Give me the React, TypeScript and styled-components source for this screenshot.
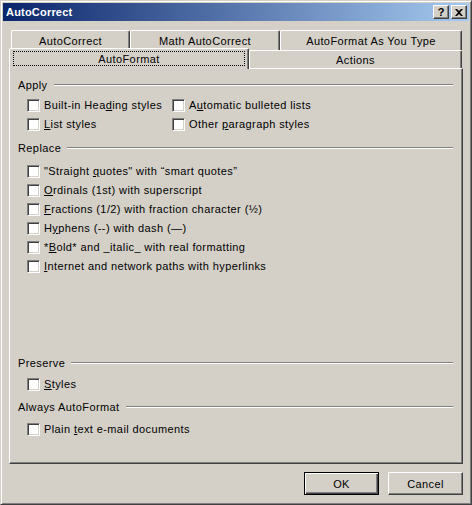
import styled, { createGlobalStyle } from 'styled-components';
import React from 'react';

// Global
const GlobalStyle = createGlobalStyle`
  html, body {
    margin: 0;
    padding: 0;
    background: #d4d0c8;
  }
  body {
    font-family: Tahoma, 'Liberation Sans', Arial, sans-serif;
    font-size: 11px;
    letter-spacing: 0.4px;
    color: #000;
  }
`;

type Option = { label: React.ReactNode };

const apply: Option[] = [
  { label: <>Built-in Hea<u>d</u>ing styles</> },
  { label: <>A<u>u</u>tomatic bulleted lists</> },
  { label: <><u>L</u>ist styles</> },
  { label: <>Other <u>p</u>aragraph styles</> },
];

const replace: Option[] = [
  { label: <>"Straight <u>q</u>uotes" with “smart quotes”</> },
  { label: <><u>O</u>rdinals (1st) with superscript</> },
  { label: <><u>F</u>ractions (1/2) with fraction character (½)</> },
  { label: <>H<u>y</u>phens (--) with dash (—)</> },
  { label: <>*<u>B</u>old* and _italic_ with real formatting</> },
  { label: <><u>I</u>nternet and network paths with hyperlinks</> },
];

function CheckRow({ label }: Option) {
  return (
    <Row>
      <Box />
      <Label>{label}</Label>
    </Row>
  );
}

function Group({
  title,
  top,
  pad,
  cols,
  items,
}: {
  title: string;
  top: number;
  pad: number;
  cols?: boolean;
  items: Option[];
}) {
  return (
    <GroupWrapper $top={top}>
      <Header>
        <HeaderText>{title}</HeaderText>
        <Etch />
      </Header>
      <Rows $pad={pad} $cols={cols}>
        {items.map((o, i) => (
          <CheckRow key={i} label={o.label} />
        ))}
      </Rows>
    </GroupWrapper>
  );
}

// Main
export default function App() {
  return (
    <>
      <GlobalStyle />
      <Window>
        <TitleBar>
          <Title>AutoCorrect</Title>
          <CaptionButtons>
            <CaptionButton aria-label='Help'>
              <HelpGlyph>?</HelpGlyph>
            </CaptionButton>
            <CaptionButton aria-label='Close'>
              <svg width='8' height='7' viewBox='0 0 8 7'>
                <path d='M0 0h2l2 2 2-2h2L5 3.5 8 7H6L4 5 2 7H0l3-3.5z' fill='#000' />
              </svg>
            </CaptionButton>
          </CaptionButtons>
        </TitleBar>

        <Body>
          <BackRow>
            <Tab $w={119}>AutoCorrect</Tab>
            <Tab $w={150}>Math AutoCorrect</Tab>
            <Tab $w={182}>AutoFormat As You Type</Tab>
          </BackRow>
          <FrontRow>
            <SelectedTab>
              <Focus>AutoFormat</Focus>
            </SelectedTab>
            <Tab $w={213} $h={18}>Actions</Tab>
          </FrontRow>

          <Panel>
            <Group title='Apply' top={9} pad={4} cols items={apply} />
            <Group title='Replace' top={7} pad={7} items={replace} />
            <Group title='Preserve' top={80} pad={5} items={[{ label: <><u>S</u>tyles</> }]} />
            <Group
              title='Always AutoFormat'
              top={6}
              pad={6}
              items={[{ label: <>Plain <u>t</u>ext e-mail documents</> }]}
            />
          </Panel>

          <ButtonRow>
            <Button $default>OK</Button>
            <Button>Cancel</Button>
          </ButtonRow>
        </Body>
      </Window>
    </>
  );
}

const Window = styled.div`
  width: 472px;
  height: 505px;
  box-sizing: border-box;
  background: #d4d0c8;
  border: 1px solid;
  border-color: #d4d0c8 #404040 #404040 #d4d0c8;
  box-shadow: inset 1px 1px #fff, inset -1px -1px #808080;
  padding: 2px;
  display: flex;
  flex-direction: column;
`;

const TitleBar = styled.div`
  height: 18px;
  background: linear-gradient(to right, #0a246a, #a6caf0);
  display: flex;
  align-items: center;
  justify-content: space-between;
  padding: 0 2px 0 3px;
`;

const Title = styled.span`
  color: #fff;
  font-weight: bold;
  font-size: 11px;
  letter-spacing: 0.2px;
`;

const CaptionButtons = styled.div`
  display: flex;
  gap: 2px;
`;

const CaptionButton = styled.div`
  width: 16px;
  height: 14px;
  box-sizing: border-box;
  background: #d4d0c8;
  border: 1px solid;
  border-color: #fff #404040 #404040 #fff;
  box-shadow: inset -1px -1px #808080;
  display: flex;
  align-items: center;
  justify-content: center;
`;

const HelpGlyph = styled.span`
  font-weight: bold;
  font-size: 11px;
  line-height: 11px;
  letter-spacing: 0;
`;

const Body = styled.div`
  flex: 1;
  display: flex;
  flex-direction: column;
  padding: 9px 6px 7px 6px;
`;

const BackRow = styled.div`
  display: flex;
  height: 20px;
  padding-left: 2px;
`;

const FrontRow = styled.div`
  display: flex;
  align-items: flex-end;
  height: 18px;
  position: relative;
  z-index: 1;
`;

const Tab = styled.div<{ $w: number; $h?: number }>`
  width: ${p => p.$w}px;
  height: ${p => p.$h ?? 20}px;
  box-sizing: border-box;
  background: #d4d0c8;
  border-top: 1px solid #fff;
  border-left: 1px solid #fff;
  border-right: 1px solid #404040;
  border-radius: 2px 2px 0 0;
  box-shadow: inset -1px 0 #808080;
  display: flex;
  align-items: center;
  justify-content: center;
  padding-top: 1px;
`;

const SelectedTab = styled.div`
  width: 240px;
  height: 21px;
  margin-bottom: -1px;
  box-sizing: border-box;
  background: #d4d0c8;
  border-top: 1px solid #fff;
  border-left: 1px solid #fff;
  border-right: 1px solid #404040;
  border-radius: 2px 2px 0 0;
  box-shadow: inset -1px 0 #808080;
  padding: 2px 3px 3px 3px;
  display: flex;
`;

const Focus = styled.div`
  flex: 1;
  border: 1px dotted #000;
  display: flex;
  align-items: center;
  justify-content: center;
`;

const Panel = styled.div`
  height: 396px;
  box-sizing: border-box;
  border: 1px solid;
  border-color: #fff #404040 #404040 #fff;
  box-shadow: inset -1px -1px #808080;
  padding: 0 9px 0 8px;
  display: flex;
  flex-direction: column;
`;

const GroupWrapper = styled.div<{ $top: number }>`
  margin-top: ${p => p.$top}px;
`;

const Header = styled.div`
  height: 14px;
  display: flex;
  align-items: center;
  gap: 6px;
`;

const HeaderText = styled.span`
  line-height: 14px;
`;

const Etch = styled.div`
  flex: 1;
  height: 0;
  border-top: 1px solid #808080;
  border-bottom: 1px solid #fff;
`;

const Rows = styled.div<{ $pad: number; $cols?: boolean }>`
  padding-top: ${p => p.$pad}px;
  padding-left: 9px;
  display: grid;
  grid-template-columns: ${p => (p.$cols ? '145px 1fr' : '1fr')};
`;

const Row = styled.div`
  height: 19px;
  display: flex;
  align-items: center;
  gap: 4px;
`;

const Box = styled.span`
  width: 13px;
  height: 13px;
  flex: none;
  box-sizing: border-box;
  background: #fff;
  border: 1px solid;
  border-color: #808080 #fff #fff #808080;
  box-shadow: inset 1px 1px #404040, inset -1px -1px #d4d0c8;
`;

const Label = styled.span`
  white-space: nowrap;
  line-height: 19px;

  u {
    text-underline-offset: 1px;
  }
`;

const ButtonRow = styled.div`
  display: flex;
  justify-content: flex-end;
  gap: 9px;
  margin-top: 8px;
`;

const Button = styled.div<{ $default?: boolean }>`
  width: 75px;
  height: 23px;
  box-sizing: border-box;
  background: #d4d0c8;
  border: 1px solid;
  border-color: ${p => (p.$default ? '#000' : '#fff #404040 #404040 #fff')};
  box-shadow: ${p =>
    p.$default
      ? 'inset 1px 1px #fff, inset -1px -1px #404040, inset -2px -2px #808080'
      : 'inset -1px -1px #808080'};
  display: flex;
  align-items: center;
  justify-content: center;
`;
